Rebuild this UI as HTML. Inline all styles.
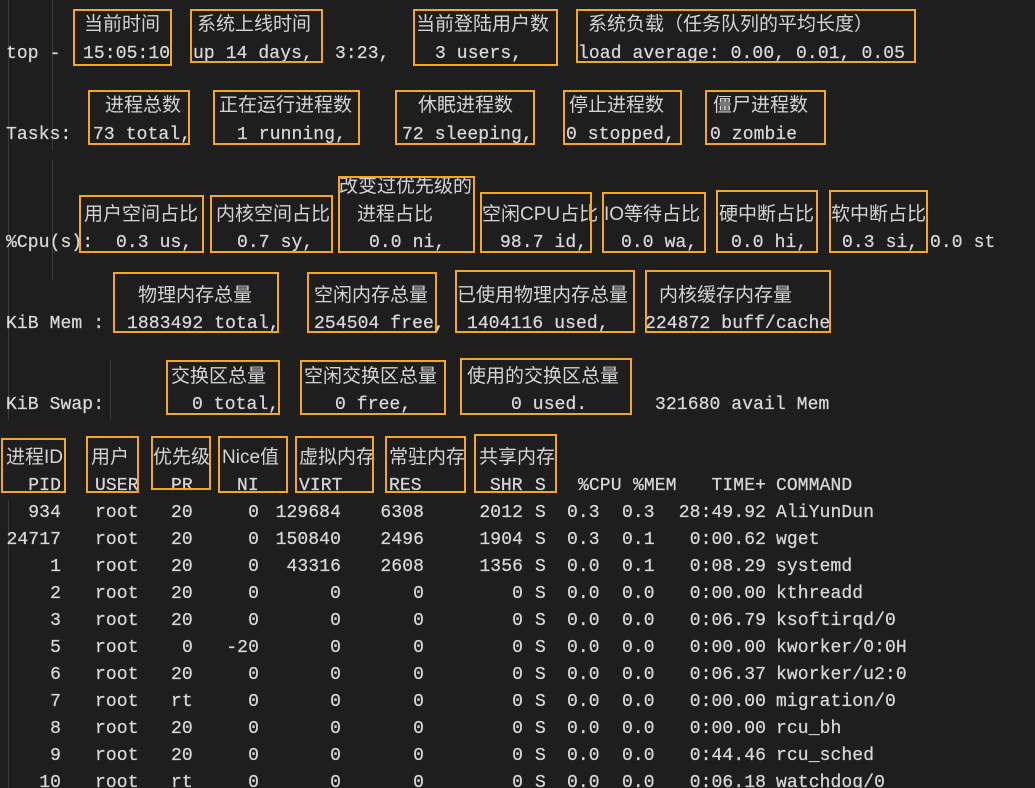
<!DOCTYPE html>
<html><head><meta charset="utf-8"><style>
html,body{margin:0;padding:0;background:#1e1e1e;width:1035px;height:788px;overflow:hidden;position:relative}
.t{position:absolute;font-family:"Liberation Mono","DejaVu Sans Mono",monospace;font-size:18px;line-height:26px;color:#d8d8d8;white-space:pre;letter-spacing:0.1px;margin-top:2px;-webkit-text-stroke:0.25px #d8d8d8}
.r{transform:translateX(-100%)}
.c{position:absolute;font-family:"Liberation Sans","Noto Sans CJK SC",sans-serif;font-size:19px;line-height:26px;color:#d4d4d4;white-space:pre;margin-top:1px}
.b{position:absolute;border:2px solid #f5a623;box-sizing:border-box}
.g{position:absolute;width:1px;background:#3a3a3a}
</style></head><body>
<div class="g" style="left:8px;top:0;height:420px"></div>
<div class="g" style="left:52px;top:0;height:150px"></div>
<div class="g" style="left:52px;top:160px;height:120px"></div>
<div class="g" style="left:110px;top:360px;height:60px"></div>
<div class="g" style="left:8px;top:500px;height:288px"></div>

<div class="c" style="left:84px;top:11px">当前时间</div>
<div class="c" style="left:197px;top:11px">系统上线时间</div>
<div class="c" style="left:416px;top:11px">当前登陆用户数</div>
<div class="c" style="left:588px;top:11px">系统负载（任务队列的平均长度）</div>
<div class="t" style="left:6px;top:39px">top -</div>
<div class="t" style="left:83px;top:39px">15:05:10</div>
<div class="t" style="left:193px;top:39px">up 14 days,</div>
<div class="t" style="left:335px;top:39px">3:23,</div>
<div class="t" style="left:435px;top:39px">3 users,</div>
<div class="t" style="left:578px;top:39px">load average: 0.00, 0.01, 0.05</div>
<div class="b" style="left:73px;top:9px;width:99px;height:57px"></div>
<div class="b" style="left:190px;top:9px;width:133px;height:54px"></div>
<div class="b" style="left:413px;top:9px;width:145px;height:57px"></div>
<div class="b" style="left:576px;top:9px;width:340px;height:54px"></div>

<div class="c" style="left:105px;top:92px">进程总数</div>
<div class="c" style="left:219px;top:92px">正在运行进程数</div>
<div class="c" style="left:418px;top:92px">休眠进程数</div>
<div class="c" style="left:569px;top:92px">停止进程数</div>
<div class="c" style="left:713px;top:92px">僵尸进程数</div>
<div class="t" style="left:6px;top:120px">Tasks:</div>
<div class="t" style="left:93px;top:120px">73 total,</div>
<div class="t" style="left:237px;top:120px">1 running,</div>
<div class="t" style="left:402px;top:120px">72 sleeping,</div>
<div class="t" style="left:566px;top:120px">0 stopped,</div>
<div class="t" style="left:710px;top:120px">0 zombie</div>
<div class="b" style="left:88px;top:90px;width:102px;height:55px"></div>
<div class="b" style="left:213px;top:90px;width:147px;height:55px"></div>
<div class="b" style="left:395px;top:90px;width:140px;height:55px"></div>
<div class="b" style="left:563px;top:90px;width:119px;height:55px"></div>
<div class="b" style="left:705px;top:90px;width:121px;height:55px"></div>

<div class="c" style="left:339px;top:173px">改变过优先级的</div>
<div class="c" style="left:84px;top:201px">用户空间占比</div>
<div class="c" style="left:216px;top:201px">内核空间占比</div>
<div class="c" style="left:357px;top:201px">进程占比</div>
<div class="c" style="left:482px;top:201px">空闲CPU占比</div>
<div class="c" style="left:604px;top:201px">IO等待占比</div>
<div class="c" style="left:719px;top:201px">硬中断占比</div>
<div class="c" style="left:831px;top:201px">软中断占比</div>
<div class="t" style="left:6px;top:228px">%Cpu(s):</div>
<div class="t" style="left:116px;top:228px">0.3 us,</div>
<div class="t" style="left:237px;top:228px">0.7 sy,</div>
<div class="t" style="left:369px;top:228px">0.0 ni,</div>
<div class="t" style="left:500px;top:228px">98.7 id,</div>
<div class="t" style="left:621px;top:228px">0.0 wa,</div>
<div class="t" style="left:731px;top:228px">0.0 hi,</div>
<div class="t" style="left:842px;top:228px">0.3 si,</div>
<div class="t" style="left:930px;top:228px">0.0 st</div>
<div class="b" style="left:79px;top:195px;width:125px;height:58px"></div>
<div class="b" style="left:210px;top:195px;width:123px;height:58px"></div>
<div class="b" style="left:338px;top:176px;width:137px;height:77px"></div>
<div class="b" style="left:480px;top:192px;width:112px;height:61px"></div>
<div class="b" style="left:602px;top:192px;width:104px;height:61px"></div>
<div class="b" style="left:716px;top:190px;width:102px;height:63px"></div>
<div class="b" style="left:829px;top:190px;width:99px;height:63px"></div>

<div class="c" style="left:138px;top:282px">物理内存总量</div>
<div class="c" style="left:314px;top:282px">空闲内存总量</div>
<div class="c" style="left:457px;top:282px">已使用物理内存总量</div>
<div class="c" style="left:659px;top:282px">内核缓存内存量</div>
<div class="t" style="left:6px;top:309px">KiB Mem :</div>
<div class="t" style="left:127px;top:309px">1883492 total,</div>
<div class="t" style="left:314px;top:309px">254504 free,</div>
<div class="t" style="left:467px;top:309px">1404116 used,</div>
<div class="t" style="left:645px;top:309px">224872 buff/cache</div>
<div class="b" style="left:113px;top:272px;width:166px;height:61px"></div>
<div class="b" style="left:307px;top:272px;width:130px;height:61px"></div>
<div class="b" style="left:455px;top:270px;width:180px;height:63px"></div>
<div class="b" style="left:645px;top:270px;width:186px;height:63px"></div>

<div class="c" style="left:171px;top:363px">交换区总量</div>
<div class="c" style="left:304px;top:363px">空闲交换区总量</div>
<div class="c" style="left:467px;top:363px">使用的交换区总量</div>
<div class="t" style="left:6px;top:390px">KiB Swap:</div>
<div class="t" style="left:192px;top:390px">0 total,</div>
<div class="t" style="left:335px;top:390px">0 free,</div>
<div class="t" style="left:511px;top:390px">0 used.</div>
<div class="t" style="left:655px;top:390px">321680 avail Mem</div>
<div class="b" style="left:166px;top:360px;width:114px;height:55px"></div>
<div class="b" style="left:300px;top:360px;width:146px;height:55px"></div>
<div class="b" style="left:460px;top:358px;width:172px;height:57px"></div>

<div class="c" style="left:6px;top:444px">进程ID</div>
<div class="c" style="left:91px;top:444px">用户</div>
<div class="c" style="left:153px;top:444px">优先级</div>
<div class="c" style="left:222px;top:444px">Nice值</div>
<div class="c" style="left:299px;top:444px">虚拟内存</div>
<div class="c" style="left:389px;top:444px">常驻内存</div>
<div class="c" style="left:479px;top:444px">共享内存</div>
<div class="t r" style="left:61px;top:471px">PID</div>
<div class="t" style="left:95px;top:471px">USER</div>
<div class="t" style="left:171px;top:471px">PR</div>
<div class="t" style="left:237px;top:471px">NI</div>
<div class="t" style="left:299px;top:471px">VIRT</div>
<div class="t" style="left:389px;top:471px">RES</div>
<div class="t" style="left:490px;top:471px">SHR</div>
<div class="t" style="left:535px;top:471px">S</div>
<div class="t" style="left:578px;top:471px">%CPU</div>
<div class="t" style="left:633px;top:471px">%MEM</div>
<div class="t r" style="left:766px;top:471px">TIME+</div>
<div class="t" style="left:776px;top:471px">COMMAND</div>
<div class="b" style="left:1px;top:438px;width:65px;height:55px"></div>
<div class="b" style="left:86px;top:436px;width:53px;height:57px"></div>
<div class="b" style="left:151px;top:436px;width:60px;height:54px"></div>
<div class="b" style="left:218px;top:436px;width:70px;height:57px"></div>
<div class="b" style="left:295px;top:436px;width:79px;height:57px"></div>
<div class="b" style="left:385px;top:436px;width:81px;height:57px"></div>
<div class="b" style="left:474px;top:434px;width:83px;height:59px"></div>

<div style="position:absolute;left:0;top:0">
<div class="t r" style="left:61px;top:498px">934</div><div class="t" style="left:95px;top:498px">root</div><div class="t" style="left:171px;top:498px">20</div><div class="t r" style="left:259px;top:498px">0</div><div class="t r" style="left:341px;top:498px">129684</div><div class="t r" style="left:424px;top:498px">6308</div><div class="t r" style="left:523px;top:498px">2012</div><div class="t" style="left:535px;top:498px">S</div><div class="t" style="left:567px;top:498px">0.3</div><div class="t" style="left:622px;top:498px">0.3</div><div class="t r" style="left:766px;top:498px">28:49.92</div><div class="t" style="left:776px;top:498px">AliYunDun</div>
<div class="t r" style="left:61px;top:525px">24717</div><div class="t" style="left:95px;top:525px">root</div><div class="t" style="left:171px;top:525px">20</div><div class="t r" style="left:259px;top:525px">0</div><div class="t r" style="left:341px;top:525px">150840</div><div class="t r" style="left:424px;top:525px">2496</div><div class="t r" style="left:523px;top:525px">1904</div><div class="t" style="left:535px;top:525px">S</div><div class="t" style="left:567px;top:525px">0.3</div><div class="t" style="left:622px;top:525px">0.1</div><div class="t r" style="left:766px;top:525px">0:00.62</div><div class="t" style="left:776px;top:525px">wget</div>
<div class="t r" style="left:61px;top:552px">1</div><div class="t" style="left:95px;top:552px">root</div><div class="t" style="left:171px;top:552px">20</div><div class="t r" style="left:259px;top:552px">0</div><div class="t r" style="left:341px;top:552px">43316</div><div class="t r" style="left:424px;top:552px">2608</div><div class="t r" style="left:523px;top:552px">1356</div><div class="t" style="left:535px;top:552px">S</div><div class="t" style="left:567px;top:552px">0.0</div><div class="t" style="left:622px;top:552px">0.1</div><div class="t r" style="left:766px;top:552px">0:08.29</div><div class="t" style="left:776px;top:552px">systemd</div>
<div class="t r" style="left:61px;top:579px">2</div><div class="t" style="left:95px;top:579px">root</div><div class="t" style="left:171px;top:579px">20</div><div class="t r" style="left:259px;top:579px">0</div><div class="t r" style="left:341px;top:579px">0</div><div class="t r" style="left:424px;top:579px">0</div><div class="t r" style="left:523px;top:579px">0</div><div class="t" style="left:535px;top:579px">S</div><div class="t" style="left:567px;top:579px">0.0</div><div class="t" style="left:622px;top:579px">0.0</div><div class="t r" style="left:766px;top:579px">0:00.00</div><div class="t" style="left:776px;top:579px">kthreadd</div>
<div class="t r" style="left:61px;top:606px">3</div><div class="t" style="left:95px;top:606px">root</div><div class="t" style="left:171px;top:606px">20</div><div class="t r" style="left:259px;top:606px">0</div><div class="t r" style="left:341px;top:606px">0</div><div class="t r" style="left:424px;top:606px">0</div><div class="t r" style="left:523px;top:606px">0</div><div class="t" style="left:535px;top:606px">S</div><div class="t" style="left:567px;top:606px">0.0</div><div class="t" style="left:622px;top:606px">0.0</div><div class="t r" style="left:766px;top:606px">0:06.79</div><div class="t" style="left:776px;top:606px">ksoftirqd/0</div>
<div class="t r" style="left:61px;top:633px">5</div><div class="t" style="left:95px;top:633px">root</div><div class="t" style="left:182px;top:633px">0</div><div class="t r" style="left:259px;top:633px">-20</div><div class="t r" style="left:341px;top:633px">0</div><div class="t r" style="left:424px;top:633px">0</div><div class="t r" style="left:523px;top:633px">0</div><div class="t" style="left:535px;top:633px">S</div><div class="t" style="left:567px;top:633px">0.0</div><div class="t" style="left:622px;top:633px">0.0</div><div class="t r" style="left:766px;top:633px">0:00.00</div><div class="t" style="left:776px;top:633px">kworker/0:0H</div>
<div class="t r" style="left:61px;top:660px">6</div><div class="t" style="left:95px;top:660px">root</div><div class="t" style="left:171px;top:660px">20</div><div class="t r" style="left:259px;top:660px">0</div><div class="t r" style="left:341px;top:660px">0</div><div class="t r" style="left:424px;top:660px">0</div><div class="t r" style="left:523px;top:660px">0</div><div class="t" style="left:535px;top:660px">S</div><div class="t" style="left:567px;top:660px">0.0</div><div class="t" style="left:622px;top:660px">0.0</div><div class="t r" style="left:766px;top:660px">0:06.37</div><div class="t" style="left:776px;top:660px">kworker/u2:0</div>
<div class="t r" style="left:61px;top:687px">7</div><div class="t" style="left:95px;top:687px">root</div><div class="t" style="left:171px;top:687px">rt</div><div class="t r" style="left:259px;top:687px">0</div><div class="t r" style="left:341px;top:687px">0</div><div class="t r" style="left:424px;top:687px">0</div><div class="t r" style="left:523px;top:687px">0</div><div class="t" style="left:535px;top:687px">S</div><div class="t" style="left:567px;top:687px">0.0</div><div class="t" style="left:622px;top:687px">0.0</div><div class="t r" style="left:766px;top:687px">0:00.00</div><div class="t" style="left:776px;top:687px">migration/0</div>
<div class="t r" style="left:61px;top:714px">8</div><div class="t" style="left:95px;top:714px">root</div><div class="t" style="left:171px;top:714px">20</div><div class="t r" style="left:259px;top:714px">0</div><div class="t r" style="left:341px;top:714px">0</div><div class="t r" style="left:424px;top:714px">0</div><div class="t r" style="left:523px;top:714px">0</div><div class="t" style="left:535px;top:714px">S</div><div class="t" style="left:567px;top:714px">0.0</div><div class="t" style="left:622px;top:714px">0.0</div><div class="t r" style="left:766px;top:714px">0:00.00</div><div class="t" style="left:776px;top:714px">rcu_bh</div>
<div class="t r" style="left:61px;top:741px">9</div><div class="t" style="left:95px;top:741px">root</div><div class="t" style="left:171px;top:741px">20</div><div class="t r" style="left:259px;top:741px">0</div><div class="t r" style="left:341px;top:741px">0</div><div class="t r" style="left:424px;top:741px">0</div><div class="t r" style="left:523px;top:741px">0</div><div class="t" style="left:535px;top:741px">S</div><div class="t" style="left:567px;top:741px">0.0</div><div class="t" style="left:622px;top:741px">0.0</div><div class="t r" style="left:766px;top:741px">0:44.46</div><div class="t" style="left:776px;top:741px">rcu_sched</div>
<div class="t r" style="left:61px;top:768px">10</div><div class="t" style="left:95px;top:768px">root</div><div class="t" style="left:171px;top:768px">rt</div><div class="t r" style="left:259px;top:768px">0</div><div class="t r" style="left:341px;top:768px">0</div><div class="t r" style="left:424px;top:768px">0</div><div class="t r" style="left:523px;top:768px">0</div><div class="t" style="left:535px;top:768px">S</div><div class="t" style="left:567px;top:768px">0.0</div><div class="t" style="left:622px;top:768px">0.0</div><div class="t r" style="left:766px;top:768px">0:06.18</div><div class="t" style="left:776px;top:768px">watchdog/0</div>
</div>
</body></html>
